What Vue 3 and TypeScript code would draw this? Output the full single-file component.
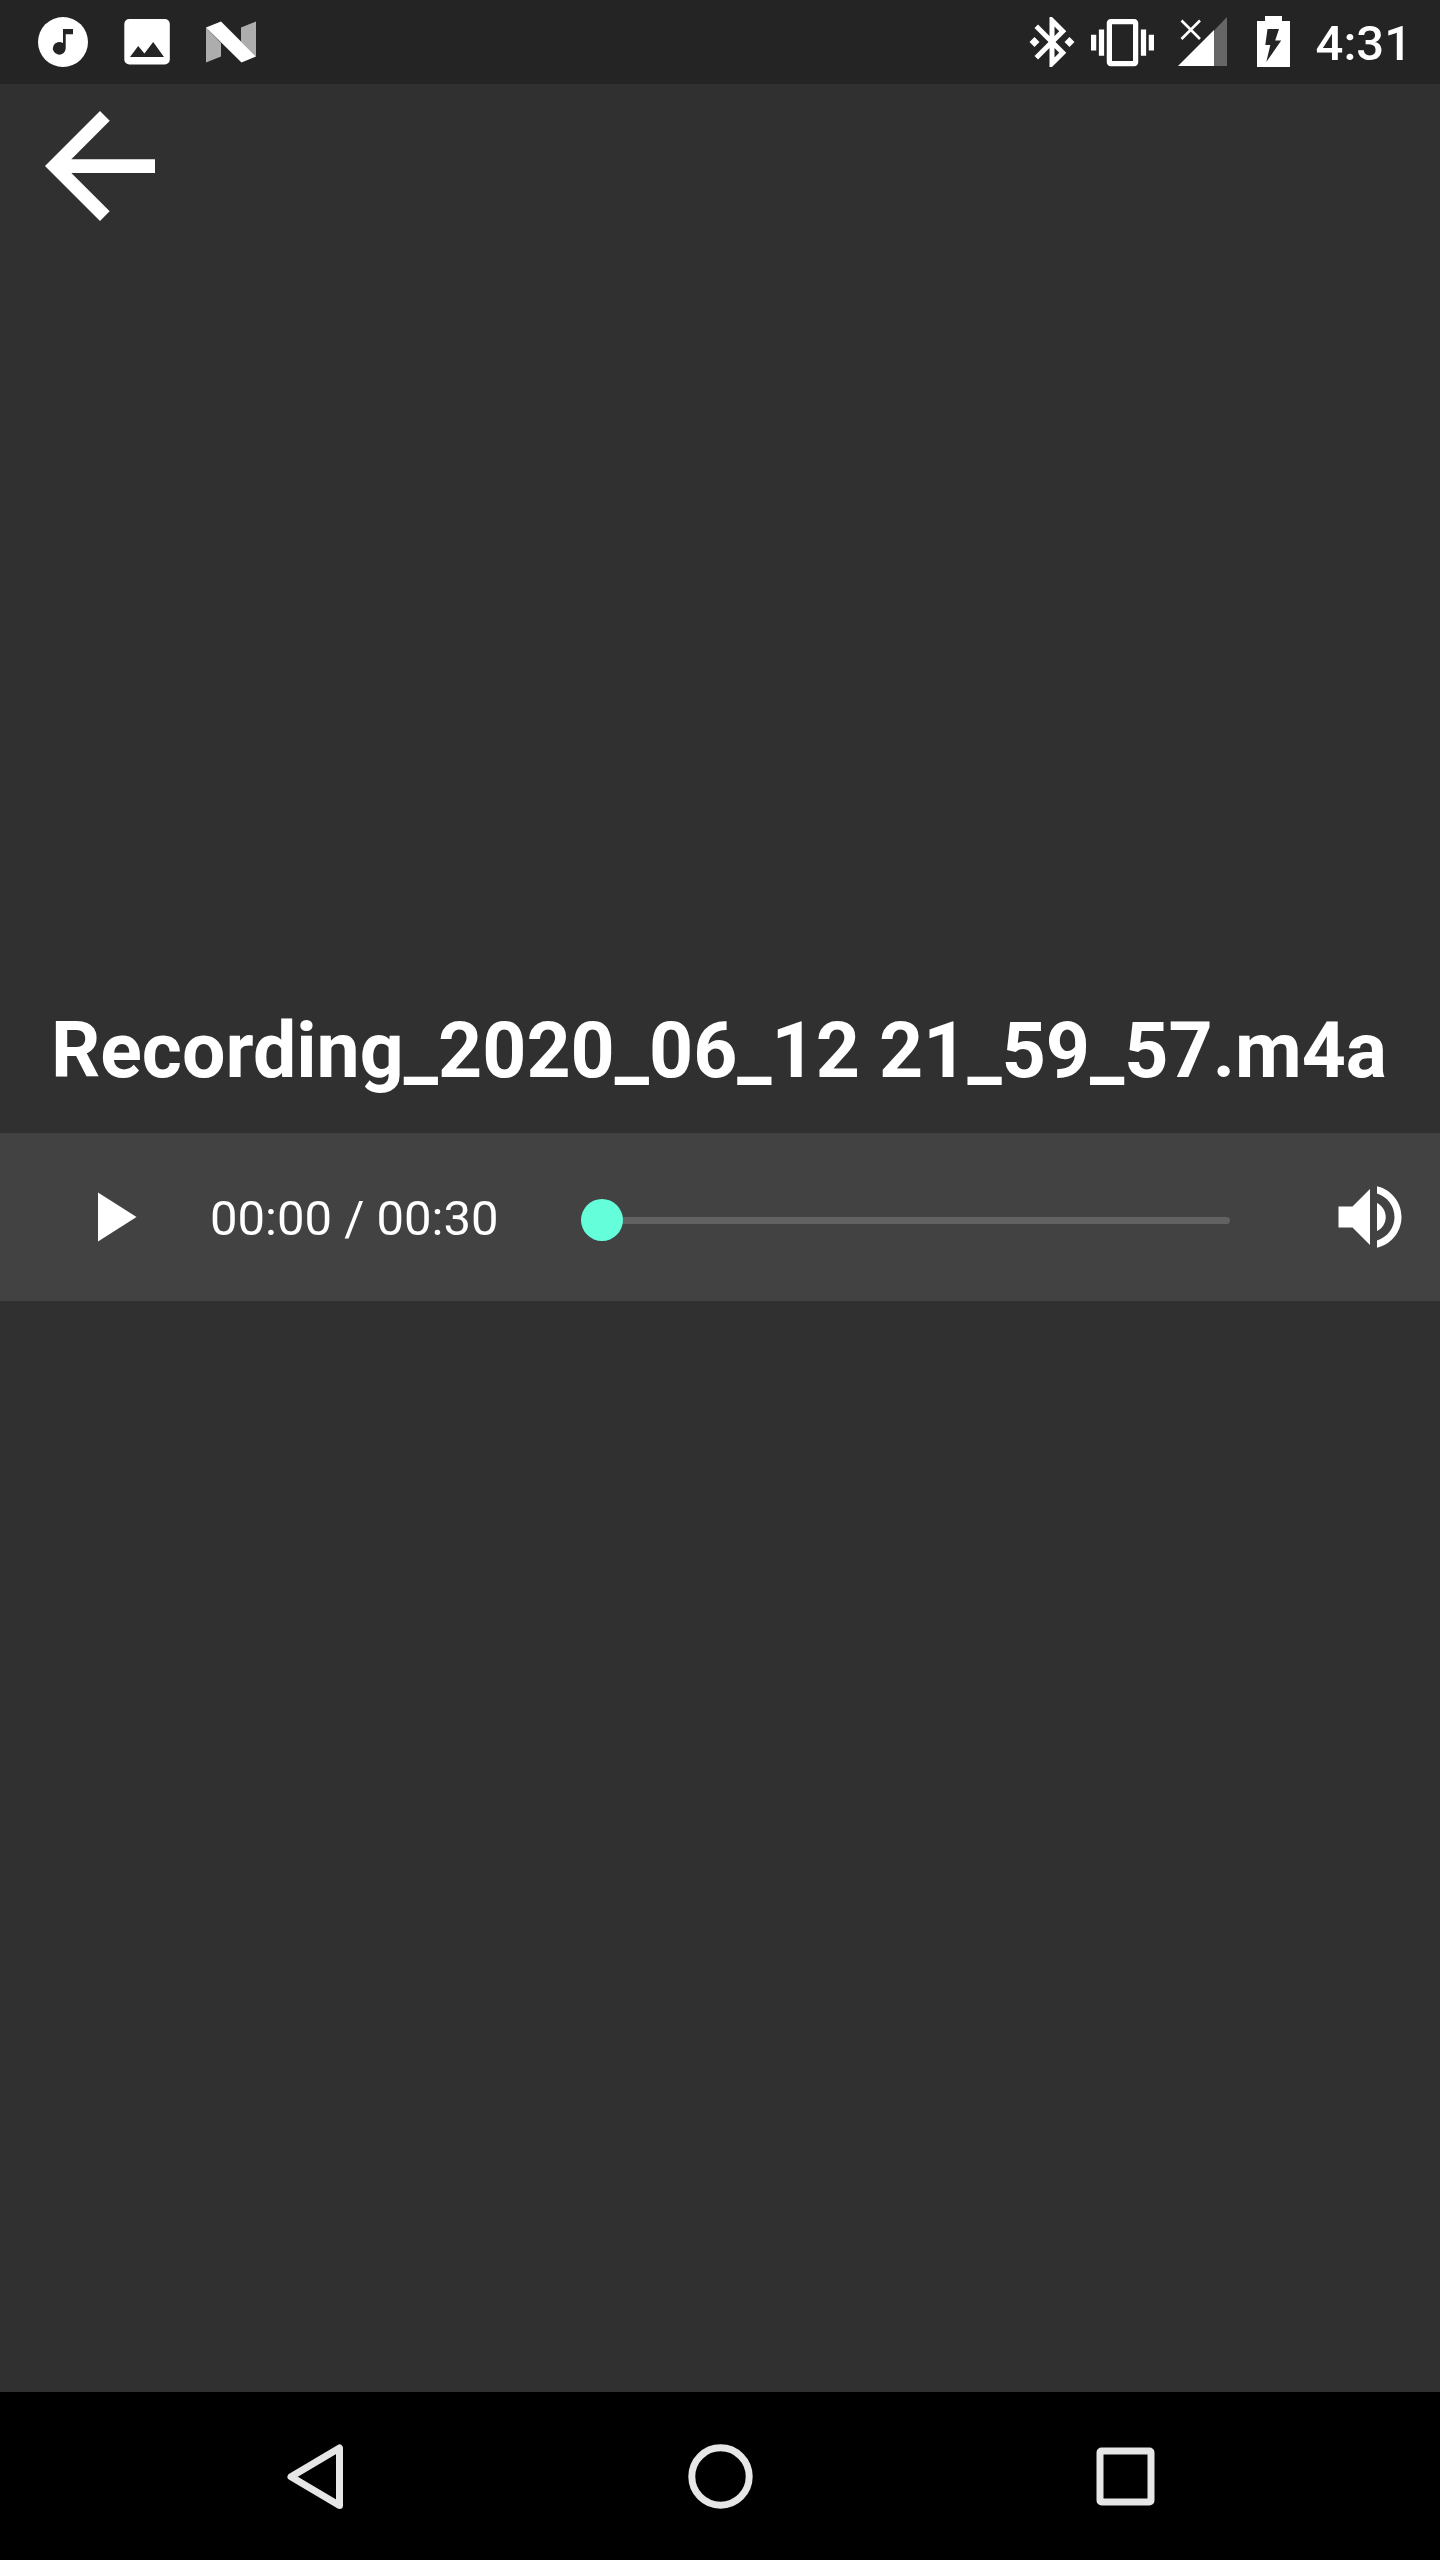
<script setup lang="ts">
import { computed, ref } from 'vue'

const fileName = 'Recording_2020_06_12 21_59_57.m4a'
const duration = 30
const position = ref(0)
const playing = ref(false)

const format = (seconds: number): string => {
  const m = Math.floor(seconds / 60)
  const s = Math.floor(seconds % 60)
  return `${String(m).padStart(2, '0')}:${String(s).padStart(2, '0')}`
}

const timeLabel = computed(() => `${format(position.value)} / ${format(duration)}`)
</script>

<template>
  <div class="screen">
    <header class="status-bar">
      <div class="notifications">
        <svg width="52" height="52" viewBox="37 16 52 52" aria-hidden="true">
          <circle cx="63" cy="42" r="25" fill="#fff" />
          <path d="M63 29h10v5.300h-7.300v14a6.400 6.400 0 1 1-2.700-5.200z" fill="#242424" />
        </svg>
        <svg width="48" height="52" viewBox="123 16 48 52" aria-hidden="true">
          <rect x="124.300" y="19" width="45.500" height="45.500" rx="5" fill="#fff" />
          <path d="M130 57l8.200-11 6.200 7.600L153.200 42 164 57z" fill="#242424" />
        </svg>
        <svg width="52" height="52" viewBox="205 16 52 52" aria-hidden="true">
          <path d="M206 27.500v35l15-6V43zM241 27.500l15-6v35l-15-15z" fill="#adadad" />
          <path d="M206 27.500l15-6 35 35-14.500 6z" fill="#fff" />
        </svg>
      </div>
      <div class="system">
        <svg class="bluetooth" width="60" height="60" viewBox="0 0 24 24" fill="#fff" aria-hidden="true">
          <path d="M7 12l-2-2-2 2 2 2 2-2zm10.710-4.290L12 2h-1v7.590L6.410 5 5 6.410 10.590 12 5 17.590 6.410 19 11 14.410V22h1l5.710-5.710-4.300-4.290 4.300-4.290zM13 5.830l1.880 1.880L13 9.590V5.830zm1.880 10.460L13 18.170v-3.760l1.880 1.880zM19 10l-2 2 2 2 2-2-2-2z" />
        </svg>
        <svg class="vibrate" width="63" height="63" viewBox="0 0 24 24" fill="#fff" aria-hidden="true">
          <path d="M0 15h2V9H0v6zm3 2h2V7H3v10zm19-8v6h2V9h-2zm-3 8h2V7h-2v10zM16.500 3h-9C6.670 3 6 3.670 6 4.500v15c0 .830.670 1.500 1.500 1.500h9c.830 0 1.500-.670 1.500-1.500v-15c0-.830-.670-1.500-1.500-1.500zM16 19H8V5h8v14z" />
        </svg>
        <svg class="signal" width="50" height="52" viewBox="1178 16 50 52" aria-hidden="true">
          <path d="M1214 30.500L1227 17v49h-13z" fill="#666" />
          <path d="M1178 66l36-36v36z" fill="#fff" />
          <path d="M1181.500 20.500l18.500 18.500M1200 20.500L1181.500 39" stroke="#fff" stroke-width="2.600" />
        </svg>
        <svg class="battery" width="34" height="52" viewBox="1257 16 34 52" aria-hidden="true">
          <path d="M1265 16h17v5h8v46h-33V21h8z" fill="#fff" />
          <path d="M1267.500 29h11.500l-3.800 11.500h6L1266.300 62l4-17h-5z" fill="#242424" />
        </svg>
        <time class="clock">4:31</time>
      </div>
    </header>

    <main class="content">
      <button class="back" type="button" aria-label="Back">
        <svg width="110" height="110" viewBox="4 4 16 16" fill="#fff">
          <path d="M20 11H7.830l5.590-5.590L12 4l-8 8 8 8 1.410-1.410L7.830 13H20v-2z" />
        </svg>
      </button>

      <section class="recording">
        <h1 class="title">{{ fileName }}</h1>
        <div class="player">
          <button class="icon-button" type="button" :aria-label="playing ? 'Pause' : 'Play'" @click="playing = !playing">
            <svg width="84" height="84" viewBox="0 0 24 24" fill="#fff">
              <path v-if="playing" d="M6 19h4V5H6v14zm8-14v14h4V5h-4z" />
              <path v-else d="M8 5v14l11-7z" />
            </svg>
          </button>
          <span class="time">{{ timeLabel }}</span>
          <input v-model.number="position" class="seek" type="range" min="0" :max="duration" aria-label="Seek" />
          <button class="icon-button" type="button" aria-label="Volume">
            <svg width="84" height="84" viewBox="0 0 24 24" fill="#fff">
              <path d="M3 9v6h4l5 5V4L7 9H3zm13.500 3c0-1.770-1.020-3.290-2.500-4.030v8.050c1.480-.730 2.500-2.250 2.500-4.020zM14 3.230v2.060c2.890.860 5 3.540 5 6.710s-2.110 5.850-5 6.710v2.060c4.010-.910 7-4.490 7-8.770s-2.990-7.860-7-8.770z" />
            </svg>
          </button>
        </div>
      </section>
    </main>

    <nav class="nav-bar" aria-label="System navigation">
      <button class="nav-button" type="button" aria-label="Back">
        <svg width="84" height="84" viewBox="0 0 84 84">
          <path d="M66.500 14v57.500L18 42.800z" />
        </svg>
      </button>
      <button class="nav-button" type="button" aria-label="Home">
        <svg width="84" height="84" viewBox="0 0 84 84">
          <circle cx="42.500" cy="42.500" r="28.700" />
        </svg>
      </button>
      <button class="nav-button" type="button" aria-label="Recent apps">
        <svg width="84" height="84" viewBox="0 0 84 84">
          <rect x="17" y="17" width="51" height="51" rx="1.500" />
        </svg>
      </button>
    </nav>
  </div>
</template>

<style>
body {
  margin: 0;
  background: #303030;
}
</style>

<style scoped>
.screen {
  display: flex;
  flex-direction: column;
  min-height: 100vh;
  background: #303030;
  color: #fff;
  font-family: Roboto, sans-serif;
}

button {
  display: flex;
  align-items: center;
  justify-content: center;
  margin: 0;
  padding: 0;
  border: 0;
  background: none;
  cursor: pointer;
}

svg {
  display: block;
  flex: none;
}

.status-bar {
  display: flex;
  align-items: center;
  justify-content: space-between;
  height: 84px;
  padding: 0 28px 0 37px;
  background: #242424;
}

.notifications,
.system {
  display: flex;
  align-items: center;
}

.notifications {
  gap: 34px;
}

.vibrate {
  margin-left: 9px;
}

.signal {
  margin-left: 24px;
}

.battery {
  margin-left: 29px;
}

.clock {
  margin-left: 25px;
  padding-top: 4px;
  font-size: 49px;
  font-weight: 500;
  line-height: 60px;
}

.content {
  display: flex;
  flex: 1;
  flex-direction: column;
}

.content::after {
  flex: 100;
  content: '';
}

.back {
  align-self: flex-start;
  padding: 27px 45px;
}

.recording {
  display: flex;
  flex: 69 0 auto;
  flex-direction: column;
  justify-content: flex-end;
}

.title {
  margin: 0 0 34px;
  padding: 2px 2px 0 0;
  font-size: 77px;
  font-weight: 700;
  line-height: 96px;
  text-align: center;
}

.player {
  display: flex;
  align-items: center;
  height: 168px;
  padding: 0 28px 0 70px;
  background: #424242;
}

.time {
  margin-left: 56px;
  padding-top: 4px;
  font-size: 49px;
  line-height: 60px;
  white-space: nowrap;
}

.seek {
  flex: 1;
  min-width: 0;
  height: 42px;
  margin: 8px 98px 0 82px;
  appearance: none;
  background: none;
  cursor: pointer;
}

.seek::-webkit-slider-runnable-track {
  height: 7px;
  border-radius: 4px;
  background: #626262;
}

.seek::-webkit-slider-thumb {
  width: 42px;
  height: 42px;
  margin-top: -18px;
  border-radius: 50%;
  appearance: none;
  background: #64ffda;
}

.nav-bar {
  display: flex;
  justify-content: center;
  height: 168px;
  background: #000;
}

.nav-button {
  width: 28.125%;
}

.nav-button svg {
  fill: none;
  stroke: #e6e6e6;
  stroke-linejoin: round;
  stroke-width: 7;
}
</style>
